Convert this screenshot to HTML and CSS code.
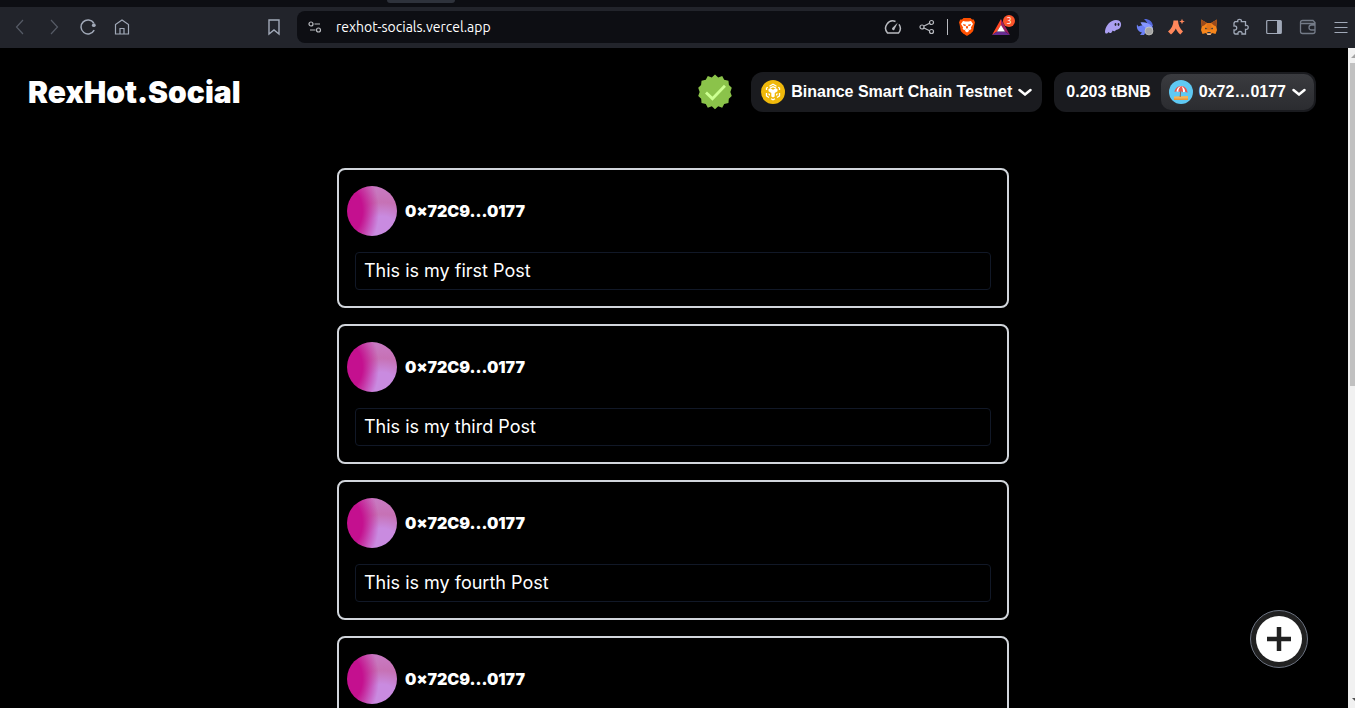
FILE: index.html
```html
<!DOCTYPE html>
<html lang="en">
<head>
<meta charset="utf-8">
<title>RexHot.Social</title>
<link rel="stylesheet" href="styles.css">
</head>
<body>
<div class="tabstrip"><span class="tab-hint"></span></div>
<div class="toolbar">
  <nav class="nav-tools" aria-label="Browser navigation">
    <button class="icon-btn dim" aria-label="Back"><svg viewBox="0 0 18 18"><path d="M12 2 5.500 9l6.500 7"/></svg></button>
    <button class="icon-btn dim" aria-label="Forward"><svg viewBox="0 0 18 18"><path d="M6 2l6.500 7L6 16"/></svg></button>
    <button class="icon-btn" aria-label="Reload"><svg viewBox="0 0 18 18"><path d="M15.200 12.200A7 7 0 1 1 14.800 5" stroke-width="1.500"/><circle cx="14.800" cy="7.200" r="1.900" class="solid"/></svg></button>
    <button class="icon-btn" aria-label="Home"><svg viewBox="0 0 18 18"><path d="M2.500 16V6.500L9 2l6.500 4.500V16zM7 16v-5.500h4V16"/></svg></button>
    <button class="icon-btn bookmark" aria-label="Bookmark"><svg viewBox="0 0 18 18"><path d="M4 2h10v14l-5-4-5 4z" stroke-width="1.400"/></svg></button>
  </nav>
  <div class="address">
    <button class="icon-btn pale" aria-label="Site settings"><svg viewBox="0 0 18 18"><circle cx="5" cy="6" r="2"/><path d="M8.500 6H14M4 12h5.500"/><circle cx="12.500" cy="12" r="2"/></svg></button>
    <input class="url" type="text" value="rexhot-socials.vercel.app" aria-label="Address">
    <div class="address-tools">
      <button class="icon-btn pale" aria-label="Speed"><svg viewBox="0 0 18 18"><path d="M11.500 3.500A7.200 7.200 0 0 0 3.500 15h11A7.200 7.200 0 0 0 15 6.300" stroke-width="1.500"/><path d="M8 10.200 13.800 4.500 10.200 11.900Q8.200 12.800 8 10.200z" class="solid"/></svg></button>
      <button class="icon-btn pale" aria-label="Share"><svg viewBox="0 0 18 18"><circle cx="4" cy="9" r="2"/><circle cx="13.500" cy="4.500" r="2"/><circle cx="13.500" cy="13.500" r="2"/><path d="M6 8l5.600-2.700M6 10l5.600 2.700"/></svg></button>
    </div>
    <span class="divider"></span>
    <button class="icon-btn" aria-label="Brave Shields"><svg viewBox="0 0 18 18" class="art"><path fill="#ff5000" d="M5.500 0h7l1.500 1.600 1.800-.1 1.200 3-.5 1.500-1.200 6.500c-.4 2-4.800 4.500-6.300 5.500-1.500-1-5.900-3.500-6.300-5.500L1.500 6 1 4.500l1.200-3 1.800.1z"/><path fill="#fff" d="M5 3l2.500.6h3L13 3l2 3-2.200 3.400.6 1.400-1.600 1.400-1.300-1L11 13l-2 1.500L7 13l.5-1.800-1.300 1-1.600-1.400.6-1.400L3 6z"/><path fill="#ff5000" d="M5 6l3 .7-.6 1.600L5.500 7.500zM13 6l-3 .7.6 1.600 1.900-.8zM8.300 8h1.400l.4 2L9 10.800 7.900 10z"/></svg></button>
    <button class="icon-btn rewards" aria-label="Brave Rewards, 3 new"><svg viewBox="0 0 18 16" class="art"><path fill="#ff4724" d="M9 0v6L5 12.500 0 16z"/><path fill="#9e1f63" d="M9 0l9 16-5-3.500L9 6z"/><path fill="#662d91" d="M0 16l5-3.500h8l5 3.500z"/><path fill="#fff" d="M9 6l4 6.500H5z"/></svg><span class="count">3</span></button>
  </div>
  <div class="ext-tools">
    <button class="icon-btn" aria-label="Phantom"><svg viewBox="0 0 18 18" class="art"><path fill="#ab9ff2" d="M1 13C2 7 6.500 2 12 2c4.500 0 6 3.500 4.500 7-1 2.600-3.500 2.700-4.600 3-1 2-2.700 1-3.200.5-1 2.700-3 3.500-4.200 1.500C3 16.500.7 16 1 13z"/><ellipse cx="11.500" cy="6.500" rx=".9" ry="1.400" fill="#23242b"/><ellipse cx="14.500" cy="6.500" rx=".9" ry="1.400" fill="#23242b"/></svg></button>
    <button class="icon-btn" aria-label="Rabby Wallet"><svg viewBox="0 0 18 18" class="art"><path fill="#5468dc" d="M8 1c4-.5 8.500 2 9 7l-5 .5C12 5 10 3 8 1z"/><path fill="#8697ff" d="M4.500 4.500C7 3.500 13 4.500 16 8c1.500 2 1 4 0 5l-5 1-3-2-2-5C5.500 6 5 5.500 4.500 4.500z"/><path fill="#6b80f5" d="M1 6.500l1.500 2L5 7.500c3 0 5.500 2.500 5 6L8 17H4l2-2.500C3 14 0 11 1 6.500z"/><circle cx="13" cy="13" r="4" fill="#a4a4a4" stroke="#d5d5cf" stroke-width=".6"/></svg></button>
    <button class="icon-btn" aria-label="Argent"><svg viewBox="0 0 18 18" class="art"><path fill="#ff875b" d="M5.500 2.500H10C10.200 7 12 11 15 13.500l-2.700 3C10.300 14.800 8.800 12.800 7.800 10.500 6.800 12.800 5 14.800 3 16.500l-3-3C3.500 11 5.300 7 5.500 2.500zM14 .7l.8 2 2 .8-2 .8-.8 2-.8-2-2-.8 2-.8z"/></svg></button>
    <button class="icon-btn" aria-label="MetaMask"><svg viewBox="0 0 18 18" class="art"><path fill="#f6851b" d="M1 1.500L7 5h4l6-3.500-.7 7L17 12l-1.500 4-3.500-1-1.500 2h-3L6 15l-3.500 1L1 12l.7-3.500z"/><path fill="#9b4a1c" d="M1 1.500L7 5 4 7.500l-2.300 1zM17 1.500L11 5l3 2.500 2.300 1z"/><path fill="#e2761b" d="M7 5h4l1 6-3 1.500L6 11z"/><path fill="#233447" d="M5 9.500l2.500 1.500-2.200.3zM13 9.500L10.500 11l2.200.3zM7.500 14h3l.4 1.300H7.100z"/><path fill="#d7c1b3" d="M7 15.400h4L10.500 17h-3z"/></svg></button>
    <button class="icon-btn" aria-label="Extensions"><svg viewBox="0 0 18 18"><path d="M3 3.700h2.800C5.300 1.500 6.500 1.300 7.500 1.300s2.300.2 1.800 2.400h4.200v3.800c2.200-.5 2.700.9 2.700 1.900s-.5 2.400-2.700 1.900v4.700H10c.4-2.300-1-2.500-2-2.500s-2.400.2-2 2.500H3L2 15v-3c2.300.3 2.700-1 2.700-2S4.300 7.700 2 8V5z" stroke-width="1.300"/></svg></button>
    <button class="icon-btn sidebar" aria-label="Sidebar"><svg viewBox="0 0 18 18"><rect x="1.700" y="2.500" width="14.600" height="13" rx="1"/><path d="M12 3h4v12h-4z" class="solid"/></svg></button>
    <button class="icon-btn muted" aria-label="Wallet"><svg viewBox="0 0 18 18"><path d="M16 6V4.500L14 2.500H3.500Q1.500 2.500 1.500 4.500v9q0 2 2 2H14q2 0 2-2V12M2 5.500h14v6.500h-3.500a2.500 2.500 0 0 1 0-5H16" stroke-width="1.300"/></svg></button>
    <button class="icon-btn" aria-label="Menu"><svg viewBox="0 0 18 18"><path d="M2.500 4.500h13M2.500 9.500h13M2.500 14.500h13"/></svg></button>
  </div>
</div>
<div class="viewport">
  <div class="page">
    <header class="site-header">
      <h1 class="brand">RexHot.Social</h1>
      <div class="account">
        <svg class="verified" viewBox="-1 -1 38 38" role="img" aria-label="Verified"><path fill="#8bc34a" d="M18 -.5l3.400 3.300 4.200-1.600 2.100 4 4.500.8.500 4.500 3 2.900-1.500 4.600 1.500 4.300-3.100 2.900-.4 4.500-4.500.9-2.100 3.900-4.200-1.500-3.400 3.200-3.400-3.200-4.200 1.500-2.100-3.900-4.500-.9-.4-4.500-3.100-2.900L1.800 18 .3 13.400l3-2.900.5-4.500 4.500-.8 2.100-4 4.200 1.600z"/><path d="M8.500 18.500l6.800 6.500L28.500 11.500" fill="none" stroke="#ccff90" stroke-width="3"/></svg>
        <button class="pill network">
          <svg class="coin" viewBox="0 0 24 24"><circle cx="12" cy="12" r="12" fill="#f0b90b"/><path d="M8.500 6.200L12 4.300l3.500 1.900M5.500 10V8l1.300-.8M18.500 10V8l-1.300-.8M5.500 13v3l2.500 1.500M18.500 13v3L16 17.500M10 18.700l2 1.100 2-1.100M9 8.200L12 6.700l3 1.500" fill="none" stroke="#fff" stroke-width="1.300"/><path fill="#fff" d="M7.500 9l1.800-.8L12 9.800l2.700-1.600 1.800.8v2.300L13.700 13v3.500L12 17.500l-1.700-1V13l-2.800-1.700zM7.500 13l1.500 1v1.800l-1.500-.9zM16.500 13L15 14v1.800l1.500-.9z"/></svg>
          <span>Binance Smart Chain Testnet</span>
          <svg class="chev" viewBox="0 0 14 8"><path d="M1.500 2L7 6.500 12.500 2"/></svg>
        </button>
        <div class="pill wallet">
          <span class="balance">0.203 tBNB</span>
          <button class="address-btn">
            <svg class="coin" viewBox="0 0 24 24"><circle cx="12" cy="12" r="12" fill="#5fc9f3"/><path fill="#f7b457" d="M5 16.500l14-.5v4H5z"/><path fill="#e79b3f" d="M5 18.500h14V20H5z"/><path d="M12 7l-.8 10" stroke="#8b5a4a" stroke-width=".9"/><path fill="#e9564b" d="M5.500 12C6 8 9 6 12.500 6s6 3 6 6.800l-2.300-1.100-2.200.5-2-1-2.500.8-2-.8z"/><path fill="#fff" d="M12.500 6C10 7.500 9 9.500 9.500 12l-2-.8C8 8.500 9.500 6.500 12.500 6zM12.500 6c2.500 1.500 3.500 3.500 3.700 5.700L14 12.200C14 9.500 13.500 7.500 12.500 6z"/></svg>
            <span>0x72…0177</span>
            <svg class="chev" viewBox="0 0 14 8"><path d="M1.500 2L7 6.500 12.500 2"/></svg>
          </button>
        </div>
      </div>
    </header>
    <main class="feed">
      <article class="post">
        <div class="author"><span class="avatar"></span><h2 class="name">0×72C9...0177</h2></div>
        <p class="body">This is my first Post</p>
      </article>
      <article class="post">
        <div class="author"><span class="avatar"></span><h2 class="name">0×72C9...0177</h2></div>
        <p class="body">This is my third Post</p>
      </article>
      <article class="post">
        <div class="author"><span class="avatar"></span><h2 class="name">0×72C9...0177</h2></div>
        <p class="body">This is my fourth Post</p>
      </article>
      <article class="post">
        <div class="author"><span class="avatar"></span><h2 class="name">0×72C9...0177</h2></div>
      </article>
    </main>
    <button class="fab" aria-label="New post"><svg viewBox="0 0 56 56"><circle cx="28" cy="28" r="23" fill="#fff"/><path d="M28 16v24M16 28h24" stroke="#212121" stroke-width="4.500"/></svg></button>
  </div>
  <div class="scrollbar"><span class="arrow"><svg viewBox="0 0 7 15"><path fill="#a3a3a3" d="M3 10h4V6z"/></svg></span><span class="thumb"></span><span class="arrow end"><svg viewBox="0 0 7 15"><path fill="#505050" d="M4 5h3v3z"/></svg></span></div>
</div>
</body>
</html>
```
FILE: styles.css
```css
* { box-sizing: border-box; }

body {
  margin: 0;
  height: 100vh;
  display: flex;
  flex-direction: column;
  overflow: hidden;
  background: #000;
  color: #fff;
  font-family: Inter, "Liberation Sans", sans-serif;
}

button {
  border: 0;
  padding: 0;
  background: none;
  color: inherit;
  font: inherit;
  cursor: pointer;
}

svg { display: block; }

h1, h2, p { margin: 0; }

/* Browser frame */
.tabstrip {
  flex: none;
  height: 7px;
  padding-left: 387px;
  background: #0d0e13;
}

.tab-hint {
  display: block;
  width: 68px;
  height: 3px;
  border-radius: 0 0 6px 6px;
  background: #2e323b;
}

.toolbar {
  flex: none;
  display: flex;
  align-items: center;
  height: 41px;
  padding-bottom: 1px;
  background: #22242b;
}

.nav-tools {
  flex: none;
  display: flex;
  gap: 16px;
  width: 297px;
  padding: 0 14px 0 11px;
}

.bookmark { margin-left: auto; }

.icon-btn {
  flex: none;
  width: 18px;
  height: 18px;
  color: #a1a9b8;
}

.icon-btn svg {
  width: 100%;
  height: 100%;
  fill: none;
  stroke: currentColor;
  stroke-width: 1.2;
}

.icon-btn svg.art { stroke: none; }
.icon-btn .solid { fill: currentColor; stroke: none; }
.dim { color: #565b66; }
.muted { color: #747b88; }
.pale { color: #b9bbc0; }

.address {
  flex: 1;
  min-width: 0;
  display: flex;
  align-items: center;
  height: 32px;
  padding: 0 9px;
  border-radius: 8px;
  background: #0d0e13;
}

.url {
  flex: 1;
  min-width: 0;
  padding: 0 0 0 12px;
  border: 0;
  outline: 0;
  background: none;
  color: #fff;
  font: 14px/20px Ubuntu, "Noto Sans", sans-serif;
}

.address-tools { display: flex; gap: 16px; }

.divider {
  width: 1px;
  height: 16px;
  margin: 0 10px 0 11px;
  background: #b9bbc0;
}

.rewards {
  position: relative;
  margin-left: 16px;
}

.rewards .art { height: 16px; }

.count {
  position: absolute;
  top: -3px;
  right: -5px;
  width: 12px;
  height: 12px;
  border-radius: 6px;
  background: #fb542b;
  color: #fff;
  font: 8px/12px "Noto Sans", sans-serif;
  text-align: center;
}

.ext-tools {
  flex: none;
  display: flex;
  justify-content: flex-end;
  gap: 14px;
  width: 336px;
  padding-right: 5px;
}

.sidebar,
.sidebar ~ .icon-btn { margin-left: 1px; }

.ext-tools .muted { margin-left: 2px; }

/* Page */
.viewport {
  flex: 1;
  min-height: 0;
  display: flex;
}

.page {
  position: relative;
  flex: 1;
  min-width: 0;
  padding-right: 2px;
  overflow: hidden;
}

.site-header {
  display: flex;
  justify-content: space-between;
  align-items: center;
  padding: 24px 30px 0 28px;
}

.brand {
  font-size: 30px;
  line-height: 40px;
  font-weight: 900;
}

.account {
  display: flex;
  align-items: center;
  gap: 12px;
  font: bold 16px/20px "Liberation Sans", sans-serif;
}

.verified {
  width: 36px;
  height: 36px;
  margin-right: 6px;
}

.pill {
  display: flex;
  align-items: center;
  height: 40px;
  border-radius: 12px;
  background: #1a1b1f;
}

.network {
  gap: 6px;
  padding: 0 10px;
}

.wallet { padding: 2px; }

.balance { padding: 0 10px; }

.address-btn {
  display: flex;
  align-items: center;
  gap: 6px;
  height: 36px;
  padding: 0 8px;
  border-radius: 10px;
  background: linear-gradient(#3a3b3f, #2b2c30);
}

.coin {
  width: 24px;
  height: 24px;
}

.chev {
  width: 14px;
  height: 8px;
  fill: none;
  stroke: #fff;
  stroke-width: 2.5;
  stroke-linecap: round;
}

.feed {
  display: flex;
  flex-direction: column;
  gap: 16px;
  max-width: 672px;
  margin: 56px auto 0;
}

.post {
  min-height: 140px;
  padding: 16px 8px;
  border: 2px solid #d1d5db;
  border-radius: 8px;
}

.author {
  display: flex;
  align-items: center;
  gap: 8px;
}

.avatar {
  width: 50px;
  height: 50px;
  border-radius: 50%;
  background:
    radial-gradient(32px 48px at 0 50%, #c4108f 48%, transparent),
    radial-gradient(32px 26px at 70% 84%, #c98be0 45%, transparent),
    linear-gradient(#c97bc4, #c671b4 35%, #c671b4);
}

.name {
  font-size: 16px;
  line-height: 24px;
  font-weight: 900;
}

.body {
  margin: 16px 8px 0;
  padding: 4px 8px;
  border: 1px solid #111827;
  border-radius: 4px;
  font-size: 18px;
  line-height: 28px;
}

.fab {
  position: absolute;
  right: 40px;
  bottom: 40px;
  width: 58px;
  height: 58px;
  border: 1px solid #6b7280;
  border-radius: 50%;
  background: #212121;
}

.scrollbar {
  flex: none;
  display: flex;
  flex-direction: column;
  width: 7px;
  background: #f1f1f1;
}

.arrow svg {
  width: 7px;
  height: 15px;
}

.thumb {
  height: 49%;
  margin-left: 2px;
  background: #c1c1c1;
}

.end { margin-top: auto; }
```
